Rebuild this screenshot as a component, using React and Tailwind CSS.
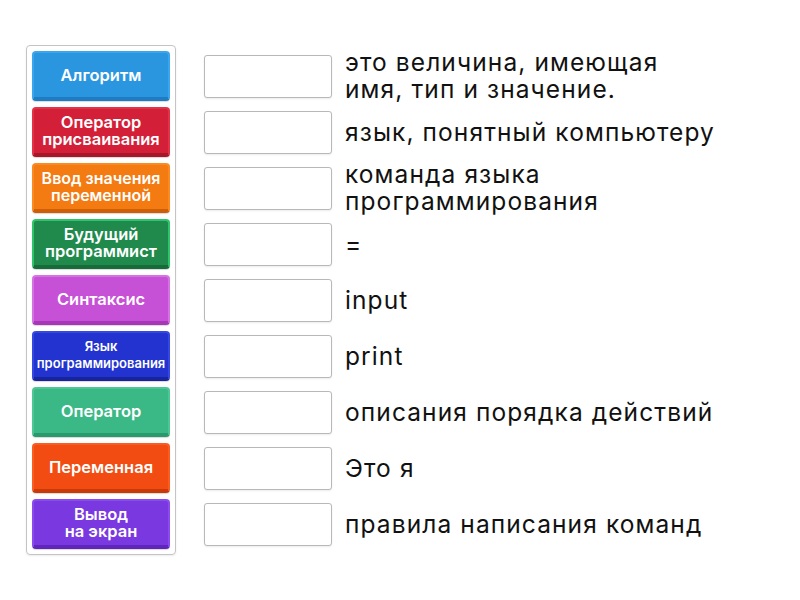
import React from 'react';

const tiles = [
  { label: 'Алгоритм', cls: 'bg-[#2b96e0] border-[#3aa6ee] border-b-[#1f7cc2]', text: 'text-[16.5px]' },
  { label: 'Оператор\nприсваивания', cls: 'bg-[#d41f38] border-[#e23348] border-b-[#a8162a]', text: 'text-[16.5px]' },
  { label: 'Ввод значения\nпеременной', cls: 'bg-[#f47a12] border-[#fb8a22] border-b-[#cf5e08]', text: 'text-[16px]' },
  { label: 'Будущий\nпрограммист', cls: 'bg-[#1f8a4c] border-[#2ec46c] border-b-[#166b39]', text: 'text-[16.5px]' },
  { label: 'Синтаксис', cls: 'bg-[#c650d6] border-[#d673e2] border-b-[#a737b8]', text: 'text-[16.5px]' },
  { label: 'Язык\nпрограммирования', cls: 'bg-[#2233cf] border-[#3549e0] border-b-[#18249c]', text: 'text-[13px] leading-[15px]' },
  { label: 'Оператор', cls: 'bg-[#3ab886] border-[#4cc795] border-b-[#2a9a6d]', text: 'text-[16.5px]' },
  { label: 'Переменная', cls: 'bg-[#f24c12] border-[#fa5d22] border-b-[#c93a08]', text: 'text-[16.5px]' },
  { label: 'Вывод\nна экран', cls: 'bg-[#7a38e0] border-[#8a4cec] border-b-[#5f25bd]', text: 'text-[16.5px]' },
];

const defs = [
  'это величина, имеющая\nимя, тип и значение.',
  'язык, понятный компьютеру',
  'команда языка\nпрограммирования',
  '=',
  'input',
  'print',
  'описания порядка действий',
  'Это я',
  'правила написания команд',
];

function Tile({ tile }) {
  return (
    <div
      className={`h-[50px] w-[138px] rounded-[4px] border-2 border-b-4 flex items-center justify-center text-center text-white font-semibold whitespace-pre-line leading-[17px] shadow-[0_1px_1px_rgba(0,0,0,0.15)] ${tile.cls} ${tile.text}`}
    >
      {tile.label}
    </div>
  );
}

export default function App() {
  return (
    <div className="w-[800px] h-[600px] bg-white flex" style={{ fontFamily: 'Inter, "Noto Sans", sans-serif' }}>
      <div className="ml-[26px] mt-[45px] h-[510px] w-[150px] rounded-[4px] border border-[#c4c4c4] px-[5px] pt-[5px] flex flex-col gap-[6px] shadow-[0_1px_2px_rgba(0,0,0,0.08)]">
        {tiles.map((t) => (
          <Tile key={t.label} tile={t} />
        ))}
      </div>
      <div className="ml-[28px] mt-[48px] flex flex-col">
        {defs.map((d) => (
          <div key={d} className="h-[56px] flex items-center">
            <div className="w-[128px] h-[43px] border border-[#b8b8b8] rounded-[3px] bg-white shadow-[0_1px_2px_rgba(0,0,0,0.08)] shrink-0" />
            <div className="ml-[13px] text-[24.5px] leading-[27px] tracking-[0.045em] text-[#111] whitespace-pre-line">{d}</div>
          </div>
        ))}
      </div>
    </div>
  );
}
